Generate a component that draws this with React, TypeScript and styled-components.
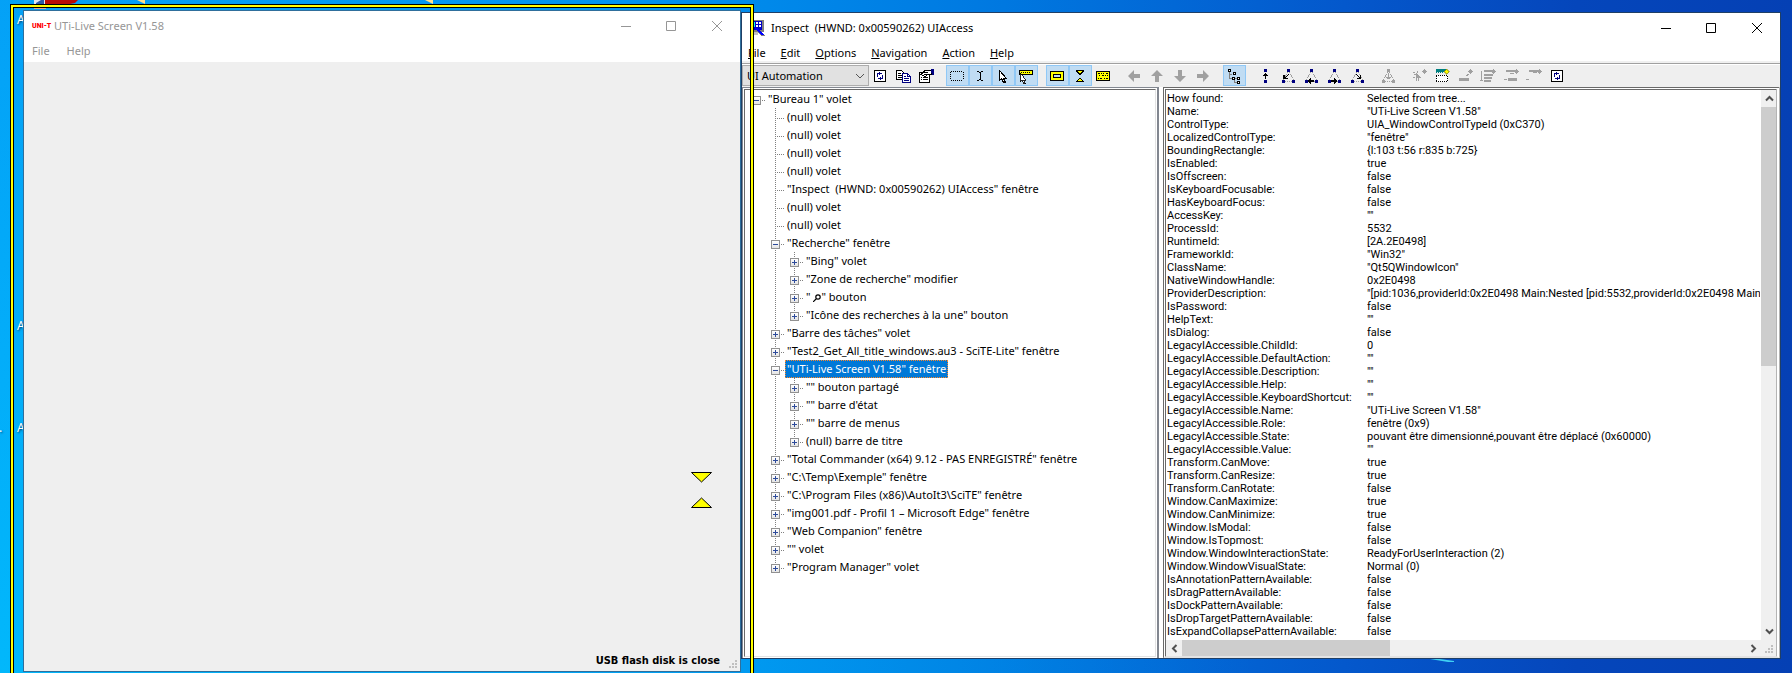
import React from 'react';
import styled, { createGlobalStyle, css } from 'styled-components';

const UI_FONT = '"Noto Sans", "Open Sans", sans-serif';
const CLASSIC_FONT = 'Roboto, "Liberation Sans", sans-serif';

const GlobalStyle = createGlobalStyle`
  * { box-sizing: border-box; }
  body { margin: 0; font: 11px/18px ${UI_FONT}; color: #000; }
  button, select { font: inherit; color: inherit; }
`;

/* ---------- desktop ---------- */

const Desktop = styled.main`
  position: relative;
  height: 100vh;
  overflow: hidden;
  background:
    radial-gradient(ellipse 70% 110% at 0% 100%, rgba(0, 200, 255, 0.6) 0%, rgba(0, 200, 255, 0) 100%),
    linear-gradient(90deg, #049ff6 0%, #0093f0 35%, #0078e0 56%, #0458cc 75%, #0546bb 88%, #0540b4 100%);
`;

const Wallpaper = styled.svg`
  position: absolute;
  left: 0;
  bottom: 0;
  width: 100%;
  height: 14px;
`;

const ShortcutStrip = styled.svg`
  position: absolute;
  left: 0;
  top: 0;
  width: 450px;
  height: 9px;
`;

const ShortcutName = styled.span<{ $top: number; $left: number }>`
  position: absolute;
  top: ${p => p.$top}px;
  left: ${p => p.$left}px;
  color: #fff;
  font-size: 12px;
  text-shadow: 1px 1px 2px #003a66;
`;

/* ---------- window parts ---------- */

const windowFrame = css`
  position: absolute;
  display: flex;
  flex-direction: column;
  background: #fff;
`;

const LiveWindow = styled.section`
  ${windowFrame}
  left: 23px;
  top: 10px;
  bottom: 1px;
  width: round(down, 40.1%, 1px);
  border: 1px solid #2f6f9c;
  color: #969696;
`;

const InspectWindow = styled.section`
  ${windowFrame}
  left: round(down, 41.4%, 1px);
  right: 11px;
  top: 12px;
  bottom: 14px;
  border: 1px solid #1f3f66;
`;

const TitleBar = styled.header<{ $compact?: boolean }>`
  flex: none;
  display: flex;
  align-items: center;
  height: ${p => (p.$compact ? 29 : 30)}px;
  padding-left: ${p => (p.$compact ? 8 : 7)}px;
`;

const Title = styled.h1`
  flex: 1;
  margin: 0 0 0 6px;
  font-size: 11px;
  font-weight: 400;
  line-height: 18px;
  white-space: pre;
`;

const Brand = styled.span`
  width: 16px;
  color: #f00;
  font: 900 7px/10px Roboto, sans-serif;
  white-space: nowrap;
`;

const CaptionButton = styled.button`
  display: grid;
  place-items: center;
  width: 46px;
  height: 28px;
  padding: 0;
  border: 0;
  background: none;

  &:first-of-type { margin-right: -1px; }
`;

const MenuBar = styled.nav<{ $roomy?: boolean }>`
  flex: none;
  display: flex;
  align-items: center;
  height: ${p => (p.$roomy ? 22 : 20)}px;
  gap: ${p => (p.$roomy ? 17 : 15)}px;
  padding-left: ${p => (p.$roomy ? 8 : 6)}px;
`;

const MenuItem = styled.button`
  padding: 0;
  border: 0;
  background: none;
  line-height: 18px;
`;

const Mnemonic = styled.span`
  text-decoration: underline;
`;

const Canvas = styled.div`
  flex: 1;
  background: #efefef;
`;

const StatusBar = styled.footer`
  flex: none;
  display: flex;
  align-items: center;
  justify-content: flex-end;
  gap: 9px;
  height: 20px;
  padding-right: 2px;
  background: #efefef;
  color: #000;
  font: 700 11px/18px "DejaVu Sans Condensed", "DejaVu Sans", sans-serif;
`;

const Grip = styled.svg`
  align-self: flex-end;
  width: 9px;
  height: 9px;
  margin-bottom: 2px;
  fill: #bfbfbf;
`;

const FocusOutline = styled.div`
  position: absolute;
  inset: -7px -14px;
  border: 1px solid #000;
  box-shadow: inset 0 0 0 2px #ff0, inset 0 0 0 3px #000;
  pointer-events: none;
`;

const Markers = styled.svg`
  position: absolute;
  right: 28px;
  bottom: 163px;
  width: 21px;
  height: 36px;
`;

/* ---------- toolbar ---------- */

const ToolBar = styled.div`
  flex: none;
  display: flex;
  align-items: flex-start;
  gap: 8px;
  height: 24px;
  padding-top: 1px;
  border-top: 1px solid #a0a0a0;
  box-shadow: inset 0 1px #fff, 0 -2px #f0f0f0;
  background: #efefef;
`;

const ToolGroup = styled.div`
  display: flex;
`;

const ModeBox = styled.div`
  position: relative;
  width: 127px;
  height: 21px;

  svg {
    position: absolute;
    right: 4px;
    top: 8px;
  }
`;

const ModeSelect = styled.select`
  appearance: none;
  width: 100%;
  height: 100%;
  padding: 0 0 0 4px;
  border: 1px solid #adadad;
  border-radius: 0;
  background: #e1e1e1;
`;

const ToolButton = styled.button<{ $on?: boolean }>`
  display: grid;
  place-items: center start;
  width: 23px;
  height: 21px;
  padding: 0 0 0 2px;
  border: 1px solid ${p => (p.$on ? '#90c8f6' : 'transparent')};
  background: ${p => (p.$on ? '#c0dcf3' : 'none')};

  svg { display: block; overflow: visible; }
`;

/* ---------- panels ---------- */

const Panels = styled.div`
  flex: 1;
  display: flex;
  gap: 4px;
  min-height: 0;
  background: #fff;
`;

const TreePanel = styled.div`
  flex: none;
  width: round(down, 40.2%, 1px);
  border: 1px solid #828790;
  border-width: 1px 2px 0 1px;
  padding: 1px;
`;

const TreeView = styled.ul`
  height: 100%;
  margin: 0;
  padding: 0 0 0 2px;
  border: 1px solid #696969;
  border-right-color: #e3e3e3;
  border-bottom-color: #e3e3e3;
  list-style: none;
  overflow: hidden;
`;

const TreeRow = styled.li`
  display: flex;
  height: 18px;
`;

type RailKind = 'none' | 'through' | 'tee' | 'end' | 'stub';

const dots = 'repeating-linear-gradient(180deg, #808080 0 1px, transparent 1px 2px)';
const dotsAcross = 'repeating-linear-gradient(90deg, #808080 0 1px, transparent 1px 2px)';
const railHeight = { none: '0', through: '18px', tee: '18px', end: '10px', stub: '0' };

const Rail = styled.span<{ $kind: RailKind }>`
  flex: none;
  display: grid;
  place-items: center;
  width: 19px;
  height: 18px;
  padding-top: 2px;
  background:
    ${dots} 9px 0 / 1px ${p => railHeight[p.$kind]} no-repeat,
    ${dotsAcross} 9px 10px / ${p => (p.$kind === 'none' || p.$kind === 'through' ? '0' : '9px')} 1px no-repeat;
`;

const Expander = styled.button`
  display: block;
  width: 9px;
  height: 9px;
  padding: 0;
  border: 1px solid #919191;
  background: linear-gradient(#fff, #e4e4e4);

  svg { display: block; }
`;

const TreeLabel = styled.span<{ $selected?: boolean }>`
  padding: 0 2px;
  white-space: pre;
  ${p => p.$selected && css`
    background: #0078d7;
    color: #fff;
    outline: 1px dotted #ff8728;
    outline-offset: -1px;
  `}
`;

const Lens = styled.svg`
  width: 8px;
  height: 8px;
  margin: 0 1px 0 2px;
  vertical-align: middle;
`;

const PropertyPanel = styled.div`
  flex: 1;
  min-width: 0;
  display: grid;
  grid-template: minmax(0, 1fr) 16px / minmax(0, 1fr) 15px;
  border: 3px double #696969;
  border-right: 4px double #b4b4b4;
  border-bottom: 2px solid #e3e3e3;
  background: #fff;
`;

const PropertyScroll = styled.div`
  overflow: hidden;
  padding: 2px 1px 0 1px;
`;

const PropertyTable = styled.table`
  width: 100%;
  table-layout: fixed;
  border-collapse: collapse;
  font: 11px/13px ${CLASSIC_FONT};
  text-align: left;
  white-space: nowrap;

  th, td { height: 13px; padding: 0; font-weight: 400; overflow: hidden; }
  th { width: 200px; }
`;

const ScrollTrack = styled.div<{ $vertical?: boolean }>`
  display: flex;
  flex-direction: ${p => (p.$vertical ? 'column' : 'row')};
  background: #f0f0f0;
`;

const ScrollButton = styled.button`
  flex: none;
  display: grid;
  place-items: center;
  width: 16px;
  height: 17px;
  padding: 0;
  border: 0;
  background: none;

  svg { display: block; }
`;

const Thumb = styled.div<{ $size: number }>`
  flex: 0 0 ${p => p.$size}%;
  background: #cdcdcd;
`;

const Spacer = styled.div`
  flex: 1;
`;

const Corner = styled.div`
  display: flex;
  justify-content: flex-end;
  padding-right: 2px;
  background: #f0f0f0;
`;

/* ---------- drawings ---------- */

const CaptionButtons = ({ color }: { color: string }) => (
  <>
    {[
      ['Minimize', 'M0 5.5H10'],
      ['Maximize', 'M.5 .5H9.5V9.5H.5Z'],
      ['Close', 'M0 0L10 10M10 0L0 10'],
    ].map(([name, d]) => (
      <CaptionButton key={name} aria-label={name}>
        <svg width="10" height="10"><path d={d} fill="none" stroke={color} /></svg>
      </CaptionButton>
    ))}
  </>
);

const ResizeGrip = () => (
  <Grip viewBox="0 0 9 9"><path d="M6 0h2v2H6zM3 3h2v2H3zM6 3h2v2H6zM0 6h2v2H0zM3 6h2v2H3zM6 6h2v2H6z" /></Grip>
);

const Chevron = ({ d }: { d: string }) => (
  <svg width="9" height="9"><path d={d} fill="none" stroke="#505050" strokeWidth="2" /></svg>
);

const Pixel = ({ children }: { children: React.ReactNode }) => (
  <svg width="16" height="16" viewBox="0 0 16 16" shapeRendering="crispEdges">{children}</svg>
);

const Refresh = () => (
  <Pixel>
    <path d="M2.5 2.5h11v11h-11z" fill="#fff" stroke="#000" />
    <path d="M7 4h1v1h2v1H8v1H7V6H6v1H5V5h2zM5 7h1v2H5zM10 7h1v2h-1zM8 9h1v1h1V9h1v2H9v1H8v-1H6v-1h2z" fill="#000080" />
  </Pixel>
);

const Copy = () => (
  <Pixel>
    <path d="M1.5 2.5h5l2 2v7h-7z" fill="#fff" stroke="#000" />
    <path d="M3 5h3M3 7h4M3 9h4" stroke="#000" />
    <path d="M7.5 5.5h5l3 3v6h-8z" fill="#fff" stroke="#000080" />
    <path d="M12.5 5.5v3h3M9 8.5h2M9 10.5h5M9 12.5h5" fill="none" stroke="#000080" />
  </Pixel>
);

const Properties = () => (
  <Pixel>
    <path d="M1.5 4.5h10v10h-10z" fill="#fff" stroke="#000" />
    <path d="M3 9.5h1M5 9.5h5M3 11.5h1M5 11.5h5" stroke="#000" />
    <path d="M3 6.5l4-4h6v4h-3l-3 2z" fill="#fff" stroke="#000" />
    <path d="M6 4.5h4M6 6.5h3" stroke="#000" />
    <path d="M13 1h3v6h-2V5h-1z" fill="#000080" />
  </Pixel>
);

const DottedBox = () => (
  <Pixel><path d="M2 3.5h12M2 12.5h12M1.5 4v8M14.5 4v8" stroke="#000" strokeDasharray="1 1" /></Pixel>
);

const Caret = () => (
  <Pixel><path d="M5 3h2v1H5zM9 3h2v1H9zM7 4h2v1H7zM8 5h1v6H8zM7 11h2v1H7zM5 12h2v1H5zM9 12h2v1H9z" /></Pixel>
);

const pointer = 'M.5 .5v10l2-2 2 4h2l-2-4h3z';

const Pointer = () => (
  <Pixel><path d={pointer} transform="translate(4 2)" fill="#fff" stroke="#000" /></Pixel>
);

const HintPointer = () => (
  <Pixel>
    <path d="M1.5 2.5h13v4h-13z" fill="#ff0" stroke="#000" />
    <path d="M3 4.5h10" stroke="#000" strokeDasharray="1 1" />
    <path d={pointer} transform="translate(2 5) scale(.85)" fill="#fff" stroke="#000" />
  </Pixel>
);

const Frame = () => (
  <Pixel>
    <path d="M1.5 3.5h13v9h-13z" fill="#ff0" stroke="#000" />
    <path d="M4.5 6.5h7v3h-7z" fill="#c0dcf3" stroke="#000" />
  </Pixel>
);

const Hourglass = () => (
  <Pixel>
    <path d="M4 2.5h8M5 3.5l3 3 3-3zM5 13.5l3-3 3 3zM4 13.5h8" fill="#ff0" stroke="#000" />
    <path d="M6 3h4v1H9v1H7V4H6zM7 11h2v1h1v1H6v-1h1z" fill="#ff0" />
  </Pixel>
);

const Tooltip = () => (
  <Pixel>
    <path d="M1.5 3.5h13v9h-13z" fill="#ff0" stroke="#000" />
    <path d="M3 5.5h2M6 5.5h1M8 5.5h1M11 5.5h2M4 7.5h1M7 7.5h2M10 7.5h1M12 7.5h1M3 10.5h1M5 10.5h2M9 10.5h1M11 10.5h2" stroke="#000" />
  </Pixel>
);

const Arrow = ({ turn }: { turn: number }) => (
  <Pixel>
    <path d="M2 8l6-6v4h6v4H8v4z" fill="#a0a0a0" shapeRendering="auto" transform={`rotate(${turn} 8 8)`} />
  </Pixel>
);

const TreeIcon = () => (
  <Pixel>
    <path d="M3.5 4v6.5h3M3.5 6.5h2M8.5 12v2.5h3M9 10.5h3" fill="none" stroke="#808080" />
    <path d="M2.5 1.5h2v2h-2zM7.5 4.500h2v2h-2zM6.500 9.500h2v2h-2zM11.500 9.500h2v2h-2zM11.500 13.500h2v2h-2z" fill="#fff" stroke="#000" />
  </Pixel>
);

const ParentStep = () => (
  <Pixel>
    <path d="M7 1h3v3H7zM7 12h3v3H7z" fill="#000080" />
    <path d="M8 5h1v6H8zM7 6h3v1H7zM6 7h5v1H6z" />
  </Pixel>
);

const Family = ({ step, muted }: { step: 'first' | 'prev' | 'next' | 'last' | 'all'; muted?: boolean }) => {
  const arrows = {
    first: 'M4 7h1v3h3v1H3V7zM5 9h1V8h1V7h1V6h1v1H8v1H7v1H6v1H5z',
    prev: 'M5 12h6v2H5zM6 11h1v4H6zM7 10h1v6H7z',
    next: 'M5 12h6v2H5zM9 11h1v4H9zM8 10h1v6H8z',
    last: 'M12 7h-1v3H8v1h4V7zM11 9h-1V8H9V7H8V6H7v1h1v1h1v1h1v1h1z',
    all: 'M8 5h1v6H8zM6 9h5v1H6zM7 10h3v1H7z',
  };
  return (
    <Pixel>
      <path d="M7.500 4L3.500 12M9.500 4l4 8M5 13.500h7" fill="none" stroke="#a0a0a0" strokeDasharray="1 1" />
      <path d="M7 1h3v3H7zM2 12h3v3H2zM12 12h3v3h-3z" fill={muted ? '#a0a0a0' : '#000080'} />
      <path d={arrows[step]} fill={muted ? '#a0a0a0' : '#000'} />
    </Pixel>
  );
};

const ActionIcon = ({ d }: { d: string }) => (
  <Pixel>
    <path d="M13 1h1v1h1v1h1v1h-1v1h-1v1h-1V5h-1V4h-1V3h1V2h1z" fill="#a0a0a0" />
    <path d={d} fill="#a0a0a0" />
  </Pixel>
);

const FocusAction = () => (
  <Pixel>
    <path d="M2 1h10v3H2z" fill="#008080" />
    <path d="M2 4.500h1M4 4.500h1M6 4.500h1M8 4.500h1" stroke="#008080" />
    <path d="M2 7h12v7H2z" fill="#fff" />
    <path d="M12 1h1v1h1v1h1v1h-1v1h-1v1h-1V5h-1V4h-1V3h1V2h1z" fill="#ff0" stroke="#808000" strokeWidth=".5" />
    <path d="M2 7.500h12M2 13.500h12M2.500 8v5M13.500 8v5" stroke="#000" strokeDasharray="1 1" />
  </Pixel>
);

const InspectLogo = () => (
  <Pixel>
    <path d="M1 0h14v12h-3l4 4h-4l-3-4H1z" fill="#808080" />
    <path d="M2 1h11v9H2z" fill="#0000c8" />
    <path d="M2 2h4v5H2z" fill="#00ffff" />
    <path d="M7 2h2v2H7zM10 2h2v2h-2zM7 5h2v2H7zM10 5h2v2h-2z" fill="#fff" />
    <path d="M2 12h7v3H2z" fill="#c0c0c0" />
    <path d="M5 8h3l7 7h-3z" fill="#0000ff" />
  </Pixel>
);

/* ---------- data ---------- */

type Tool = { name: string; icon: React.ReactNode; on?: boolean };

const toolGroups: Tool[][] = [
  [
    { name: 'Watch focus', icon: <DottedBox />, on: true },
    { name: 'Watch caret', icon: <Caret />, on: true },
    { name: 'Watch cursor', icon: <Pointer />, on: true },
    { name: 'Watch tooltips', icon: <HintPointer />, on: true },
  ],
  [
    { name: 'Show highlight rectangle', icon: <Frame />, on: true },
    { name: 'Show caret highlight', icon: <Hourglass />, on: true },
    { name: 'Show information tooltip', icon: <Tooltip /> },
  ],
  [
    { name: 'Back', icon: <Arrow turn={0} /> },
    { name: 'Up', icon: <Arrow turn={90} /> },
    { name: 'Down', icon: <Arrow turn={270} /> },
    { name: 'Forward', icon: <Arrow turn={180} /> },
  ],
  [{ name: 'Show tree', icon: <TreeIcon />, on: true }],
  [
    { name: 'Parent', icon: <ParentStep /> },
    { name: 'First child', icon: <Family step="first" /> },
    { name: 'Previous sibling', icon: <Family step="prev" /> },
    { name: 'Next sibling', icon: <Family step="next" /> },
    { name: 'Last child', icon: <Family step="last" /> },
  ],
  [{ name: 'Default action', icon: <Family step="all" muted /> }],
  [
    { name: 'Select', icon: <ActionIcon d="M2 4h2v1H2zM6 3h1v2H6zM3 6h2v1H3zM5 5h1v8H5zM6 6h1v1h1v1h1v1h1v1H8v3H7v-3H6zM2 9h2v1H2z" /> },
    { name: 'Set focus', icon: <FocusAction /> },
    { name: 'Select item', icon: <ActionIcon d="M2 10h10v3H2zM9 7h2v1H9zM10 6h2v1h-2z" /> },
    { name: 'Extend selection', icon: <ActionIcon d="M1 3h1v10H1zM4 2h8v2H4zM4 6h9v2H4zM4 9h8v2H4zM4 12h7v2H4zM0 12h3v1H0z" /> },
    { name: 'Add to selection', icon: <ActionIcon d="M3 2h9v2H3zM1 11h3v1H1zM5 10h9v3H5zM7 5h4v1H7z" /> },
    { name: 'Remove from selection', icon: <ActionIcon d="M3 2h9v2H3zM0 11h3v1H0zM7 4h4v1H7z" /> },
    { name: 'Refresh properties', icon: <Refresh /> },
  ],
];

type Node = { text: React.ReactNode; depth: 0 | 1 | 2; box?: '+' | '-'; last?: boolean; selected?: boolean };

const searchLabel = (
  <>
    "
    <Lens viewBox="0 0 8 8">
      <path d="M0 8L3 5M5 .8a2.200 2.200 0 1 1 0 4.400a2.200 2.200 0 1 1 0-4.400" fill="none" stroke="#000" strokeWidth="1.200" />
    </Lens>
    " bouton
  </>
);

const nodes: Node[] = [
  { text: '"Bureau 1" volet', depth: 0, box: '-' },
  { text: '(null) volet', depth: 1 },
  { text: '(null) volet', depth: 1 },
  { text: '(null) volet', depth: 1 },
  { text: '(null) volet', depth: 1 },
  { text: '"Inspect  (HWND: 0x00590262) UIAccess" fenêtre', depth: 1 },
  { text: '(null) volet', depth: 1 },
  { text: '(null) volet', depth: 1 },
  { text: '"Recherche" fenêtre', depth: 1, box: '-' },
  { text: '"Bing" volet', depth: 2, box: '+' },
  { text: '"Zone de recherche" modifier', depth: 2, box: '+' },
  { text: searchLabel, depth: 2, box: '+' },
  { text: '"Icône des recherches à la une" bouton', depth: 2, box: '+', last: true },
  { text: '"Barre des tâches" volet', depth: 1, box: '+' },
  { text: '"Test2_Get_All_title_windows.au3 - SciTE-Lite" fenêtre', depth: 1, box: '+' },
  { text: '"UTi-Live Screen V1.58" fenêtre', depth: 1, box: '-', selected: true },
  { text: '"" bouton partagé', depth: 2, box: '+' },
  { text: "\"\" barre d'état", depth: 2, box: '+' },
  { text: '"" barre de menus', depth: 2, box: '+' },
  { text: '(null) barre de titre', depth: 2, box: '+', last: true },
  { text: '"Total Commander (x64) 9.12 - PAS ENREGISTRÉ" fenêtre', depth: 1, box: '+' },
  { text: '"C:\\Temp\\Exemple" fenêtre', depth: 1, box: '+' },
  { text: '"C:\\Program Files (x86)\\AutoIt3\\SciTE" fenêtre', depth: 1, box: '+' },
  { text: '"img001.pdf - Profil 1 – Microsoft Edge" fenêtre', depth: 1, box: '+' },
  { text: '"Web Companion" fenêtre', depth: 1, box: '+' },
  { text: '"" volet', depth: 1, box: '+' },
  { text: '"Program Manager" volet', depth: 1, box: '+', last: true },
];

const properties: [string, string][] = [
  ['How found:', 'Selected from tree...'],
  ['Name:', '"UTi-Live Screen V1.58"'],
  ['ControlType:', 'UIA_WindowControlTypeId (0xC370)'],
  ['LocalizedControlType:', '"fenêtre"'],
  ['BoundingRectangle:', '{l:103 t:56 r:835 b:725}'],
  ['IsEnabled:', 'true'],
  ['IsOffscreen:', 'false'],
  ['IsKeyboardFocusable:', 'false'],
  ['HasKeyboardFocus:', 'false'],
  ['AccessKey:', '""'],
  ['ProcessId:', '5532'],
  ['RuntimeId:', '[2A.2E0498]'],
  ['FrameworkId:', '"Win32"'],
  ['ClassName:', '"Qt5QWindowIcon"'],
  ['NativeWindowHandle:', '0x2E0498'],
  ['ProviderDescription:', '"[pid:1036,providerId:0x2E0498 Main:Nested [pid:5532,providerId:0x2E0498 Main(p'],
  ['IsPassword:', 'false'],
  ['HelpText:', '""'],
  ['IsDialog:', 'false'],
  ['LegacyIAccessible.ChildId:', '0'],
  ['LegacyIAccessible.DefaultAction:', '""'],
  ['LegacyIAccessible.Description:', '""'],
  ['LegacyIAccessible.Help:', '""'],
  ['LegacyIAccessible.KeyboardShortcut:', '""'],
  ['LegacyIAccessible.Name:', '"UTi-Live Screen V1.58"'],
  ['LegacyIAccessible.Role:', 'fenêtre (0x9)'],
  ['LegacyIAccessible.State:', 'pouvant être dimensionné,pouvant être déplacé (0x60000)'],
  ['LegacyIAccessible.Value:', '""'],
  ['Transform.CanMove:', 'true'],
  ['Transform.CanResize:', 'true'],
  ['Transform.CanRotate:', 'false'],
  ['Window.CanMaximize:', 'true'],
  ['Window.CanMinimize:', 'true'],
  ['Window.IsModal:', 'false'],
  ['Window.IsTopmost:', 'false'],
  ['Window.WindowInteractionState:', 'ReadyForUserInteraction (2)'],
  ['Window.WindowVisualState:', 'Normal (0)'],
  ['IsAnnotationPatternAvailable:', 'false'],
  ['IsDragPatternAvailable:', 'false'],
  ['IsDockPatternAvailable:', 'false'],
  ['IsDropTargetPatternAvailable:', 'false'],
  ['IsExpandCollapsePatternAvailable:', 'false'],
];

/* ---------- composition ---------- */

const TreeItem = ({ node }: { node: Node }) => {
  const own: RailKind = node.depth === 0 ? 'stub' : node.last ? 'end' : 'tee';
  return (
    <TreeRow role="treeitem" aria-level={node.depth + 1} aria-selected={!!node.selected}>
      {node.depth > 0 && <Rail $kind="none" />}
      {node.depth > 1 && <Rail $kind="through" />}
      <Rail $kind={own}>
        {node.box && (
          <Expander aria-label={node.box === '+' ? 'Expand' : 'Collapse'}>
            <svg width="7" height="7">
              <path d={node.box === '+' ? 'M1 3.5h5M3.5 1v5' : 'M1 3.5h5'} stroke="#2d4b9b" />
            </svg>
          </Expander>
        )}
      </Rail>
      <TreeLabel $selected={node.selected}>{node.text}</TreeLabel>
    </TreeRow>
  );
};

const ToolItem = ({ tool }: { tool: Tool }) => (
  <ToolButton $on={tool.on} aria-label={tool.name} aria-pressed={tool.on}>{tool.icon}</ToolButton>
);

export default function App() {
  return (
    <Desktop>
      <GlobalStyle />
      <Wallpaper viewBox="0 0 1792 14" preserveAspectRatio="none">
        <path d="M1430 0h10l14 2v1h-6z" fill="#3fd0f4" />
      </Wallpaper>
      <ShortcutStrip viewBox="0 0 450 9">
        <path d="M34 0h11v4H34z" fill="#dfe6f2" />
        <path d="M36 3l5-3h3v4h-8z" fill="#2a5aa8" />
        <path d="M45 0h33l-3 3-5 1H45z" fill="#b80c06" />
        <path d="M34 8h12v1H34z" fill="#e0a58c" />
        <path d="M137 0h8v4zM425 0h8v4z" fill="#ffe08c" />
      </ShortcutStrip>
      <ShortcutName $top={11} $left={17}>A</ShortcutName>
      <ShortcutName $top={317} $left={17}>A</ShortcutName>
      <ShortcutName $top={419} $left={17}>A</ShortcutName>
      <ShortcutName $top={419} $left={-1}>.</ShortcutName>

      <InspectWindow aria-label="Inspect">
        <TitleBar>
          <InspectLogo />
          <Title>Inspect  (HWND: 0x00590262) UIAccess</Title>
          <CaptionButtons color="#000" />
        </TitleBar>
        <MenuBar>
          {['File', 'Edit', 'Options', 'Navigation', 'Action', 'Help'].map(name => (
            <MenuItem key={name}><Mnemonic>{name[0]}</Mnemonic>{name.slice(1)}</MenuItem>
          ))}
        </MenuBar>
        <ToolBar role="toolbar">
          <ToolGroup>
            <ModeBox>
              <ModeSelect aria-label="Mode">
                <option>UI Automation</option>
              </ModeSelect>
              <svg width="10" height="7"><path d="M1 1l4 4 4-4" fill="none" stroke="#555" /></svg>
            </ModeBox>
            <ToolItem tool={{ name: 'Refresh', icon: <Refresh /> }} />
            <ToolItem tool={{ name: 'Copy all', icon: <Copy /> }} />
            <ToolItem tool={{ name: 'Settings', icon: <Properties /> }} />
          </ToolGroup>
          {toolGroups.map((group, i) => (
            <ToolGroup key={i}>
              {group.map(tool => <ToolItem key={tool.name} tool={tool} />)}
            </ToolGroup>
          ))}
        </ToolBar>
        <Panels>
          <TreePanel>
            <TreeView role="tree">
              {nodes.map((node, i) => <TreeItem key={i} node={node} />)}
            </TreeView>
          </TreePanel>
          <PropertyPanel>
            <PropertyScroll>
              <PropertyTable>
                <tbody>
                  {properties.map(([name, value]) => (
                    <tr key={name}><th scope="row">{name}</th><td>{value}</td></tr>
                  ))}
                </tbody>
              </PropertyTable>
            </PropertyScroll>
            <ScrollTrack $vertical>
              <ScrollButton aria-label="Scroll up"><Chevron d="M1 6.500L4.500 3L8 6.500" /></ScrollButton>
              <Thumb $size={47} />
              <Spacer />
              <ScrollButton aria-label="Scroll down"><Chevron d="M1 2.500L4.500 6L8 2.500" /></ScrollButton>
            </ScrollTrack>
            <ScrollTrack>
              <ScrollButton aria-label="Scroll left"><Chevron d="M6.500 1L3 4.500L6.500 8" /></ScrollButton>
              <Thumb $size={35} />
              <Spacer />
              <ScrollButton aria-label="Scroll right"><Chevron d="M2.500 1L6 4.500L2.500 8" /></ScrollButton>
            </ScrollTrack>
            <Corner><ResizeGrip /></Corner>
          </PropertyPanel>
        </Panels>
      </InspectWindow>

      <LiveWindow aria-label="UTi-Live Screen">
        <TitleBar $compact>
          <Brand>UNI-T</Brand>
          <Title>UTi-Live Screen V1.58</Title>
          <CaptionButtons color="#969696" />
        </TitleBar>
        <MenuBar $roomy>
          <MenuItem>File</MenuItem>
          <MenuItem>Help</MenuItem>
        </MenuBar>
        <Canvas />
        <StatusBar>
          USB flash disk is close
          <ResizeGrip />
        </StatusBar>
        <Markers viewBox="0 0 21 36">
          <path d="M.500 .500h20l-10 9.500zM.500 35.500h20l-10-9.500z" fill="#ff0" stroke="#000" />
        </Markers>
        <FocusOutline />
      </LiveWindow>
    </Desktop>
  );
}
